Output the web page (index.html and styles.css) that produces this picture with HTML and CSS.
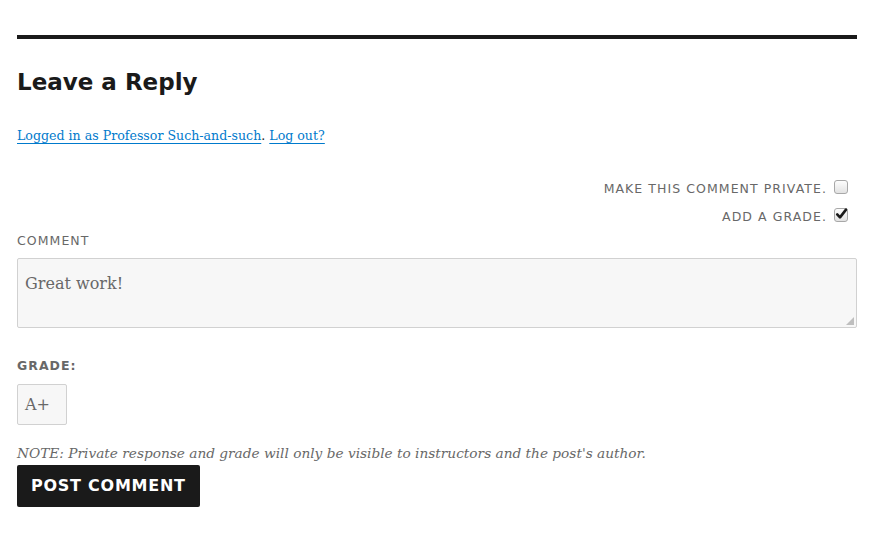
FILE: index.html
```html
<!DOCTYPE html>
<html>
<head>
<meta charset="utf-8">
<link rel="stylesheet" href="styles.css">
</head>
<body>
<div class="respond">
  <h3 class="reply-title">Leave a Reply</h3>
  <p class="logged-in"><a href="#">Logged in as Professor Such-and-such</a>. <a href="#">Log out?</a></p>
  <div class="options">
    <div class="option"><span class="opt-label">Make this comment private.</span><span class="box"></span></div>
    <div class="option"><span class="opt-label">Add a grade.</span><span class="box checked"><svg viewBox="0 0 14 14" width="14" height="14"><path d="M3.2 7.4 L6 10.4 L12 2.6" fill="none" stroke="#1a1a1a" stroke-width="2.6" stroke-linecap="round" stroke-linejoin="round"/></svg></span></div>
  </div>
  <div class="field">
    <div class="label">Comment</div>
    <div class="textarea">Great work!<span class="grip"></span></div>
  </div>
  <div class="grade">
    <div class="grade-label">Grade:</div>
    <div class="grade-input">A+</div>
  </div>
  <p class="note">NOTE: Private response and grade will only be visible to instructors and the post's author.</p>
  <div class="button">Post Comment</div>
</div>
</body>
</html>
```
FILE: styles.css
```css
html, body { margin: 0; padding: 0; background: #fff; }
body { font-family: "DejaVu Serif", serif; color: #1a1a1a; }
.respond {
  width: 840px;
  margin: 35px 0 0 17px;
  border-top: 4px solid #1a1a1a;
  display: flex;
  flex-direction: column;
}
.reply-title {
  font-family: "DejaVu Sans", sans-serif;
  font-weight: bold;
  font-size: 23px;
  line-height: 30px;
  margin: 28px 0 0 0;
}
.logged-in {
  margin: 30px 0 0 0;
  font-size: 12.6px;
  line-height: 18px;
  color: #1a1a1a;
}
.logged-in a { color: #007acc; text-decoration: underline; text-underline-offset: 3px; }
.options { display: flex; flex-direction: column; align-items: flex-end; margin-top: 35px; gap: 10px; }
.option { display: flex; align-items: center; gap: 7px; margin-right: 9px; }
.opt-label, .label {
  font-family: "DejaVu Sans", sans-serif;
  text-transform: uppercase;
  font-size: 12.5px;
  letter-spacing: 1.06px;
  color: #686868;
  line-height: 18px;
}
.box {
  width: 14px; height: 14px;
  border: 1px solid #a8a8a8;
  border-radius: 3px;
  background: linear-gradient(#fdfdfd, #e2e2e2);
  box-sizing: border-box;
  position: relative;
  margin-top: -5px;
}
.box svg { position: absolute; left: -1px; top: -2px; }
.field { margin-top: 6px; }
.label { margin-bottom: 8px; }
.textarea {
  position: relative;
  height: 70px;
  box-sizing: border-box;
  border: 1px solid #d1d1d1;
  border-radius: 2px;
  background: #f7f7f7;
  padding: 13px 7px;
  font-size: 16px;
  line-height: 24px;
  color: #686868;
  font-family: "DejaVu Serif", serif;
}
.grip {
  position: absolute; right: 2px; bottom: 2px; width: 8px; height: 8px;
  background: radial-gradient(circle, #aaa 0.6px, transparent 1px) 0 0 / 2px 2px;
  clip-path: polygon(100% 0, 100% 100%, 0 100%);
}
.grade { margin-top: 29px; }
.grade-label {
  font-family: "DejaVu Sans", sans-serif;
  font-weight: bold;
  text-transform: uppercase;
  font-size: 12.5px;
  letter-spacing: 1px;
  color: #686868;
  line-height: 18px;
}
.grade-input {
  margin-top: 9px;
  width: 50px; height: 41px;
  box-sizing: border-box;
  border: 1px solid #d1d1d1;
  border-radius: 2px;
  background: #f7f7f7;
  padding: 9px 7px;
  font-size: 16px;
  line-height: 22px;
  color: #686868;
}
.note {
  margin: 18px 0 0 0;
  font-style: italic;
  font-size: 13.7px;
  line-height: 20px;
  color: #686868;
}
.button {
  align-self: flex-start;
  margin-top: 2px;
  background: #1a1a1a;
  color: #fff;
  border-radius: 2px;
  font-family: "DejaVu Sans", sans-serif;
  font-weight: bold;
  text-transform: uppercase;
  font-size: 16px;
  letter-spacing: 0.75px;
  line-height: 20px;
  padding: 11px 14px;
}
```
